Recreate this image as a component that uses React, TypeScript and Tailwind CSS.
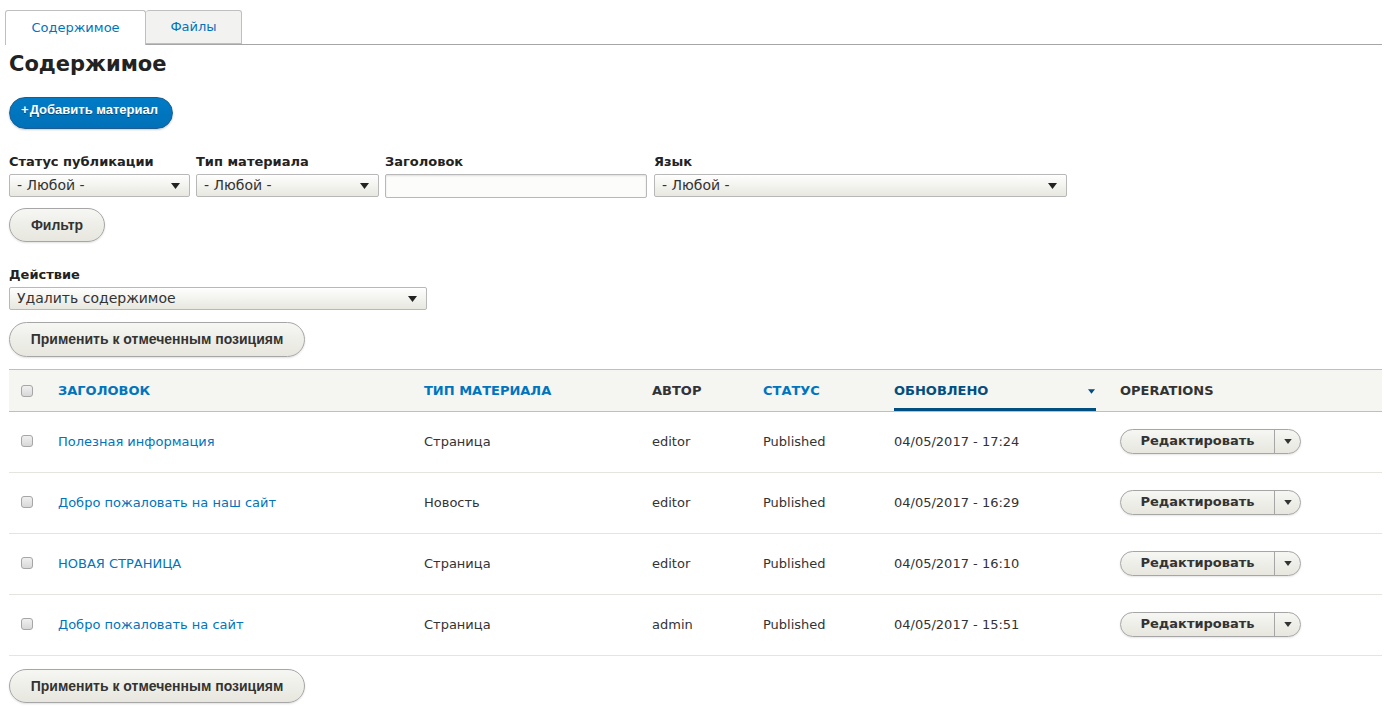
import React from "react"

const rows = [
  { title: "Полезная информация", type: "Страница", author: "editor", status: "Published", updated: "04/05/2017 - 17:24" },
  { title: "Добро пожаловать на наш сайт", type: "Новость", author: "editor", status: "Published", updated: "04/05/2017 - 16:29" },
  { title: "НОВАЯ СТРАНИЦА", type: "Страница", author: "editor", status: "Published", updated: "04/05/2017 - 16:10" },
  { title: "Добро пожаловать на сайт", type: "Страница", author: "admin", status: "Published", updated: "04/05/2017 - 15:51" },
]

function Arrow({ className = "" }: { className?: string }) {
  return (
    <svg width="9" height="6" viewBox="0 0 9 6" className={className}>
      <path d="M0 0 L9 0 L4.5 6 Z" fill="currentColor" />
    </svg>
  )
}

function Select({ value, width }: { value: string; width: string }) {
  return (
    <div
      className={`${width} h-[23px] flex items-center justify-between pl-[7px] pr-[9px] border border-[#b8b8b8] rounded-[2px] bg-gradient-to-b from-[#fefefe] to-[#e8e8e0] text-[14px] text-[#333] shadow-[inset_0_1px_0_#fff]`}
    >
      <span>{value}</span>
      <Arrow className="text-[#222]" />
    </div>
  )
}

function Checkbox() {
  return (
    <span className="block w-[12px] h-[12px] rounded-[3px] border border-[#a6a6a6] bg-gradient-to-b from-[#f0f0f0] to-[#d8d8d8]" />
  )
}

function GrayButton({ children, className = "" }: { children: React.ReactNode; className?: string }) {
  return (
    <button
      className={`h-[34px] rounded-full border border-[#a6a6a6] bg-gradient-to-b from-[#f6f6f3] to-[#e7e7df] text-[#333] font-['Liberation_Sans',Arial,sans-serif] font-bold text-[14px] shadow-[0_1px_2px_rgba(0,0,0,0.12)] ${className}`}
    >
      {children}
    </button>
  )
}

export default function App() {
  return (
    <div className="min-h-screen bg-white font-['DejaVu_Sans',sans-serif] text-[#222] pl-[5px] pr-[4px] pt-[10px]">
      {/* Tabs */}
      <div className="flex border-b border-[#a6a6a6] h-[35px]">
        <div className="w-[141px] h-[35px] -mb-px flex items-center justify-center bg-white border border-b-0 border-[#bfbfbf] rounded-t-[3px] text-[13px] text-[#0074bd]">
          Содержимое
        </div>
        <div className="w-[96px] h-[34px] flex items-center justify-center bg-[#f2f2f0] border border-l-0 border-[#bfbfbf] rounded-t-[3px] text-[13px] text-[#0074bd]">
          Файлы
        </div>
      </div>

      <div className="pl-[4px]">
        <h1 className="mt-[5px] text-[21px] leading-[28px] font-bold text-[#222]">Содержимое</h1>

        <button className="mt-[19px] h-[32px] w-[164px] rounded-full border border-[#1e5c90] bg-gradient-to-b from-[#007bc6] to-[#0071b8] text-white font-['Liberation_Sans',Arial,sans-serif] font-bold text-[13px] pb-[7px] pr-[3px] shadow-[0_1px_2px_rgba(0,0,0,0.2)] [text-shadow:0_1px_0_rgba(0,0,0,0.4)]">
          +&#8202;Добавить материал
        </button>

        {/* Filters */}
        <div className="mt-[25px] flex items-start">
          <div className="flex flex-col">
            <label className="text-[13px] leading-[16px] font-bold text-[#222]">Статус публикации</label>
            <div className="mt-[4px]"><Select value="- Любой -" width="w-[181px]" /></div>
          </div>
          <div className="flex flex-col ml-[6px]">
            <label className="text-[13px] leading-[16px] font-bold text-[#222]">Тип материала</label>
            <div className="mt-[4px]"><Select value="- Любой -" width="w-[183px]" /></div>
          </div>
          <div className="flex flex-col ml-[6px]">
            <label className="text-[13px] leading-[16px] font-bold text-[#222]">Заголовок</label>
            <div className="mt-[4px] w-[262px] h-[24px] border border-[#b8b8b8] rounded-[2px] bg-[#fcfcfa] shadow-[inset_0_1px_2px_rgba(0,0,0,0.12)]" />
          </div>
          <div className="flex flex-col ml-[7px]">
            <label className="text-[13px] leading-[16px] font-bold text-[#222]">Язык</label>
            <div className="mt-[4px]"><Select value="- Любой -" width="w-[413px]" /></div>
          </div>
        </div>

        <GrayButton className="mt-[10px] w-[96px]">Фильтр</GrayButton>

        {/* Action */}
        <div className="mt-[25px] flex flex-col">
          <label className="text-[13px] leading-[16px] font-bold text-[#222]">Действие</label>
          <div className="mt-[4px]"><Select value="Удалить содержимое" width="w-[418px]" /></div>
        </div>

        <GrayButton className="mt-[12px] w-[296px] h-[35px]">Применить к отмеченным позициям</GrayButton>

        {/* Table */}
        <table className="mt-[12px] w-full border-collapse text-[13px] text-[#333]">
          <thead>
            <tr className="bg-[#f5f5f2] border-t border-b border-[#bfbfbf] h-[42px] text-left uppercase font-bold text-[13px]">
              <th className="w-[39px] pl-[12px]"><Checkbox /></th>
              <th className="w-[366px] pl-[10px] text-[#0074bd]">Заголовок</th>
              <th className="w-[228px] pl-[10px] text-[#0074bd]">Тип материала</th>
              <th className="w-[111px] pl-[10px] text-[#333]">Автор</th>
              <th className="w-[131px] pl-[10px] text-[#0074bd]">Статус</th>
              <th className="w-[226px] pl-[10px] pr-[14px] align-bottom">
                <div className="h-[40px] flex items-center justify-between border-b-[3px] border-[#004f80] text-[#004f80] pt-[3px]">
                  <span>Обновлено</span>
                  <Arrow className="mr-[1px] w-[7px] h-[5px]" />
                </div>
              </th>
              <th className="pl-[10px] text-[#333]">Operations</th>
            </tr>
          </thead>
          <tbody>
            {rows.map((r) => (
              <tr key={r.updated} className="h-[61px] border-b border-[#e6e4df]">
                <td className="pl-[12px] pb-[2px]"><Checkbox /></td>
                <td className="pl-[10px] text-[#0074bd]">{r.title}</td>
                <td className="pl-[10px]">{r.type}</td>
                <td className="pl-[10px]">{r.author}</td>
                <td className="pl-[10px]">{r.status}</td>
                <td className="pl-[10px]">{r.updated}</td>
                <td className="pl-[10px] pb-[2px]">
                  <div className="flex w-[181px] h-[25px] rounded-full border border-[#a6a6a6] bg-gradient-to-b from-[#f6f6f3] to-[#e7e7df] overflow-hidden shadow-[0_1px_2px_rgba(0,0,0,0.1)]">
                    <span className="w-[154px] flex items-center justify-center border-r border-[#a6a6a6] font-bold text-[13px] text-[#333]">
                      Редактировать
                    </span>
                    <span className="flex-1 flex items-center justify-center">
                      <Arrow className="w-[8px] h-[5px] text-[#333]" />
                    </span>
                  </div>
                </td>
              </tr>
            ))}
          </tbody>
        </table>

        <GrayButton className="mt-[13px] w-[296px]">Применить к отмеченным позициям</GrayButton>
      </div>
    </div>
  )
}
